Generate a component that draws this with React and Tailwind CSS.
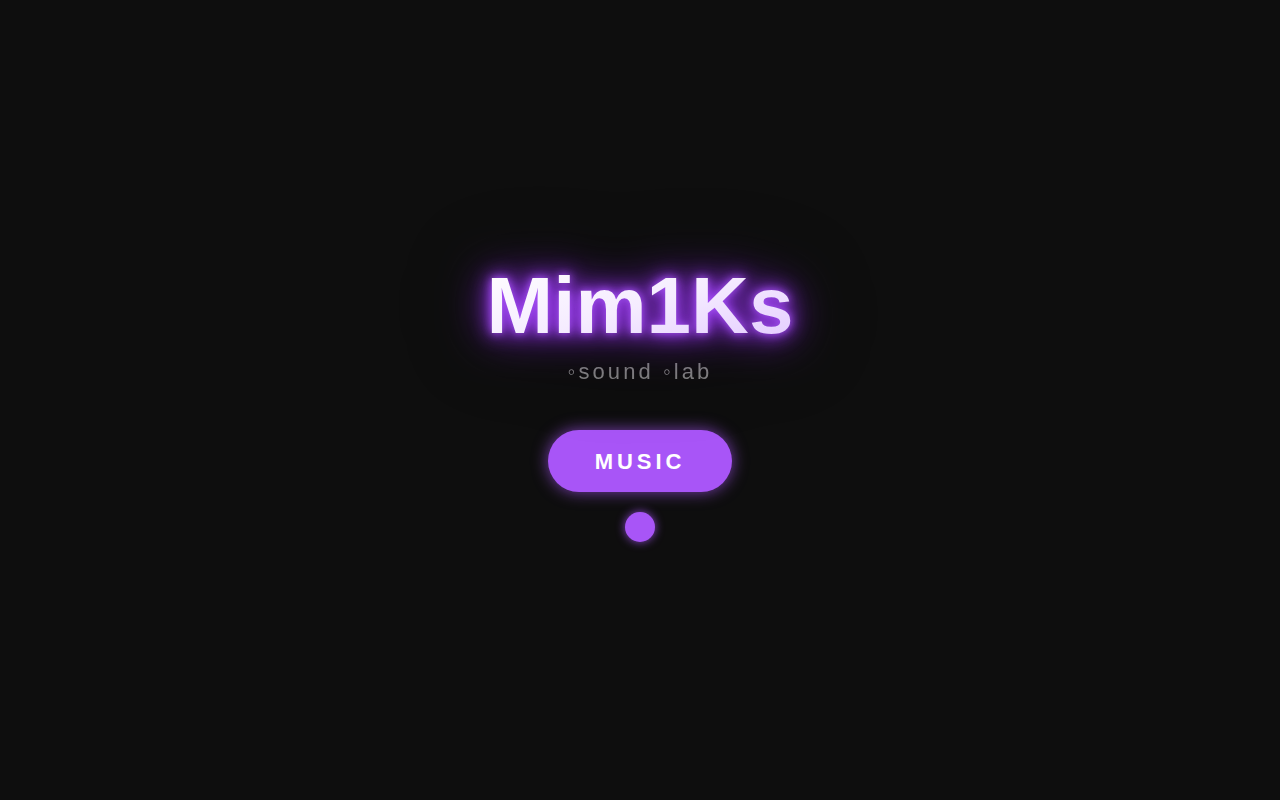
const App = () => {
  return (
    <div className="min-h-screen w-full bg-[#0e0e0e] pt-2 flex flex-col items-center justify-center font-['Liberation_Sans',Arial,sans-serif]">
      <div className="flex flex-col items-center [filter:drop-shadow(0_0_30px_rgba(0,0,0,0.85))]">
        <h1 className="text-[80px] leading-none font-bold [filter:drop-shadow(0_0_4px_#a855f7)_drop-shadow(0_0_9px_#9333ea)_drop-shadow(0_0_20px_rgba(147,51,234,0.7))]">
          <span className="bg-gradient-to-br from-white via-[#f5ecff] to-[#e2c8ff] bg-clip-text text-transparent">
            Mim1Ks
          </span>
        </h1>
        <p className="mt-[15px] mb-[3px] text-[22px] leading-none tracking-[0.14em] text-[#7c7c7c]">
          ◦sound ◦lab
        </p>
      </div>
      <button className="mt-[44px] h-[62px] px-[47px] rounded-full bg-[#a855f7] text-white text-[22px] font-bold tracking-[0.18em] shadow-[0_0_16px_rgba(168,85,247,0.7)]">
        MUSIC
      </button>
      <div className="mt-5 w-[30px] h-[30px] rounded-full bg-[#a855f7] shadow-[0_0_10px_rgba(168,85,247,0.8)]" />
    </div>
  );
};

export default App;
